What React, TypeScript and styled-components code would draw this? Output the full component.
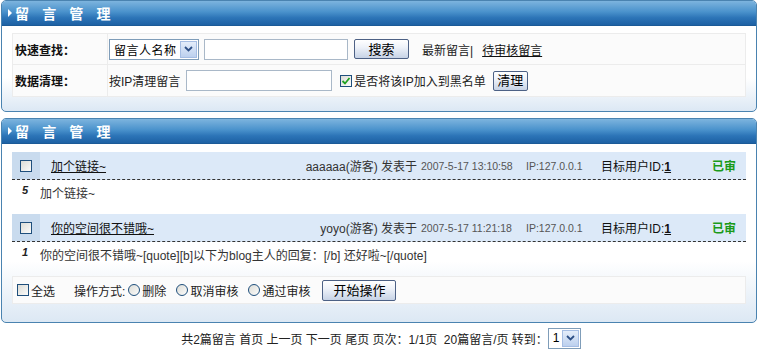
import React from "react";
import styled, { createGlobalStyle } from "styled-components";

const Global = createGlobalStyle`
  html, body { margin: 0; padding: 0; background: #fff; }
  body {
    font-family: "Liberation Sans", "Noto Sans CJK SC", sans-serif;
    font-size: 12px;
    color: #222;
    width: 758px;
  }
  * { box-sizing: border-box; }
`;

const Page = styled.div`
  width: 758px;
  padding: 0 1px 0 1px;
`;

const Panel = styled.section<{ $gap?: number }>`
  border: 1px solid #4a83b0;
  border-radius: 5px;
  overflow: hidden;
  margin-top: ${(p) => p.$gap ?? 0}px;
  background: linear-gradient(to bottom, #ffffff 0%, #ffffff 70%, #dce8f4 100%);
`;

const PanelHead = styled.div`
  height: 25px;
  display: flex;
  align-items: center;
  padding-left: 6px;
  background: linear-gradient(to bottom, #7db4de 0%, #4a92cc 45%, #2c74b7 70%, #1d61a4 100%);
  border-bottom: 1px solid #1b5a97;
  color: #fff;
  font-family: "Noto Sans CJK SC", sans-serif;
  font-weight: 700;
  font-size: 14px;
  letter-spacing: 5px;
  line-height: 1;
`;

const Arrow = styled.span`
  width: 0;
  height: 0;
  border-top: 4px solid transparent;
  border-bottom: 4px solid transparent;
  border-left: 4px solid #fff;
  margin-right: 3px;
`;

const PanelBody = styled.div<{ $pt: number; $pb: number }>`
  padding: ${(p) => p.$pt}px 10px ${(p) => p.$pb}px 10px;
`;

const FormTable = styled.div`
  border: 1px solid #ececec;
  background: #fbfbfb;
`;

const FormRow = styled.div<{ $last?: boolean }>`
  display: grid;
  grid-template-columns: 95px 1fr;
  height: 31px;
  border-bottom: ${(p) => (p.$last ? "none" : "1px solid #ececec")};
`;

const FormLabel = styled.div`
  display: flex;
  align-items: center;
  padding-left: 2px;
  font-weight: 700;
  font-family: "Noto Sans CJK SC", sans-serif;
  border-right: 1px solid #ececec;
  color: #111;
`;

const FormCell = styled.div`
  display: flex;
  align-items: center;
  padding-left: 1px;
`;

const SelectBox = styled.div<{ $w: number }>`
  width: ${(p) => p.$w}px;
  height: 21px;
  border: 1px solid #7f9db9;
  background: #fff;
  display: flex;
  align-items: center;
  justify-content: space-between;
  padding: 1px 1px 1px 4px;
  font-size: 12px;
  letter-spacing: 0.5px;
  color: #000;
  white-space: nowrap;
`;

const SelectArrow = styled.span`
  width: 17px;
  height: 17px;
  background: linear-gradient(to bottom, #e4edfa, #bcd0ee);
  border: 1px solid #a5bde3;
  display: flex;
  align-items: center;
  justify-content: center;
  flex: none;
`;

const TextInput = styled.div<{ $w: number; $ml: number }>`
  width: ${(p) => p.$w}px;
  height: 21px;
  margin-left: ${(p) => p.$ml}px;
  border: 1px solid #a9b8c8;
  background: #fff;
`;

const Btn = styled.button<{ $w: number; $h: number; $ml: number }>`
  width: ${(p) => p.$w}px;
  height: ${(p) => p.$h}px;
  margin-left: ${(p) => p.$ml}px;
  border: 1px solid #4d6185;
  border-radius: 2px;
  background: linear-gradient(to bottom, #ffffff 0%, #eef2f9 40%, #c7d3e6 100%);
  font-family: "Noto Sans CJK SC", sans-serif;
  font-size: 13px;
  line-height: 1;
  color: #000;
  padding: 0 0 2px 0;
  display: flex;
  align-items: center;
  justify-content: center;
`;

const Plain = styled.span<{ $ml?: number }>`
  margin-left: ${(p) => p.$ml ?? 0}px;
  color: #222;
  white-space: nowrap;
`;

const Link = styled.a<{ $ml?: number }>`
  margin-left: ${(p) => p.$ml ?? 0}px;
  color: #111;
  text-decoration: underline;
  white-space: nowrap;
`;

const CheckBox = styled.span<{ $ml?: number }>`
  width: 12px;
  height: 12px;
  margin-left: ${(p) => p.$ml ?? 0}px;
  border: 1px solid #1f4f7c;
  background: linear-gradient(135deg, #dcdcd6, #fcfcfb);
  display: inline-flex;
  align-items: center;
  justify-content: center;
  flex: none;
`;

const Radio = styled.span<{ $ml?: number }>`
  width: 12px;
  height: 12px;
  border-radius: 50%;
  margin-left: ${(p) => p.$ml ?? 0}px;
  border: 1px solid #1f4f7c;
  background: linear-gradient(135deg, #dcdcd6, #fcfcfb);
  flex: none;
`;

const MsgHead = styled.div<{ $mt: number }>`
  margin-top: ${(p) => p.$mt}px;
  display: grid;
  grid-template-columns: 28px 1fr auto 105px 75px 111px 34px;
  height: 28px;
  background: #dce9f8;
  border-bottom: 1px dashed #333;
  align-items: center;
`;

const CheckCell = styled.div`
  height: 100%;
  background: #c9dbee;
  display: flex;
  align-items: center;
  justify-content: center;
`;

const Title = styled.a`
  padding-left: 11px;
  color: #111;
  text-decoration: underline;
  font-size: 12px;
`;

const Author = styled.span`
  color: #333;
  text-align: right;
  padding-right: 4px;
  white-space: nowrap;
`;

const Small = styled.span`
  font-size: 10.5px;
  color: #555;
  white-space: nowrap;
`;

const Target = styled.span`
  font-size: 12px;
  color: #111;
  white-space: nowrap;
  & u { font-weight: 700; }
`;

const Status = styled.span`
  color: #1a9a1a;
  font-weight: 700;
  font-family: "Noto Sans CJK SC", sans-serif;
`;

const MsgBody = styled.div<{ $h: number }>`
  display: grid;
  grid-template-columns: 28px 1fr;
  height: ${(p) => p.$h}px;
  align-items: start;
  padding-top: 4px;
  color: #333;
`;

const Num = styled.span`
  text-align: center;
  font-weight: 700;
  font-style: italic;
  font-size: 11px;
  color: #222;
  padding-right: 2px;
`;

const Ops = styled.div`
  height: 28px;
  border: 1px solid #ececec;
  background: #fbfbfb;
  display: flex;
  align-items: center;
  padding-left: 4px;
`;

const Pager = styled.div`
  height: 30px;
  display: flex;
  align-items: center;
  justify-content: center;
  padding-left: 4px;
  color: #222;
  white-space: pre;
`;

const Chevron = () => (
  <svg width="9" height="6" viewBox="0 0 9 6">
    <path d="M1 1 L4.5 4.5 L8 1" fill="none" stroke="#2d4f86" strokeWidth="1.8" />
  </svg>
);

const Tick = () => (
  <svg width="10" height="10" viewBox="0 0 10 10">
    <path d="M1.5 5 L4 7.5 L8.5 2" fill="none" stroke="#21a121" strokeWidth="1.8" />
  </svg>
);

const messages = [
  {
    title: "加个链接~",
    author: "aaaaaa(游客) 发表于",
    date: "2007-5-17 13:10:58",
    num: "5",
    body: "加个链接~",
    mt: 8,
    h: 34,
  },
  {
    title: "你的空间很不错哦~",
    author: "yoyo(游客) 发表于",
    date: "2007-5-17 11:21:18",
    num: "1",
    body: "你的空间很不错哦~[quote][b]以下为blog主人的回复：[/b] 还好啦~[/quote]",
    mt: 0,
    h: 34,
  },
];

export default function App() {
  return (
    <Page>
      <Global />
      <Panel>
        <PanelHead>
          <Arrow />
          留 言 管 理
        </PanelHead>
        <PanelBody $pt={7} $pb={14}>
          <FormTable>
            <FormRow>
              <FormLabel>快速查找：</FormLabel>
              <FormCell>
                <SelectBox $w={90}>
                  留言人名称
                  <SelectArrow>
                    <Chevron />
                  </SelectArrow>
                </SelectBox>
                <TextInput $w={144} $ml={5} />
                <Btn $w={55} $h={20} $ml={6}>搜索</Btn>
                <Plain $ml={13}>最新留言|</Plain>
                <Link $ml={9}>待审核留言</Link>
              </FormCell>
            </FormRow>
            <FormRow $last>
              <FormLabel>数据清理：</FormLabel>
              <FormCell>
                <Plain>按IP清理留言</Plain>
                <TextInput $w={146} $ml={6} />
                <CheckBox $ml={8}>
                  <Tick />
                </CheckBox>
                <Plain $ml={2}>是否将该IP加入到黑名单</Plain>
                <Btn $w={35} $h={20} $ml={7}>清理</Btn>
              </FormCell>
            </FormRow>
          </FormTable>
        </PanelBody>
      </Panel>

      <Panel $gap={6}>
        <PanelHead>
          <Arrow />
          留 言 管 理
        </PanelHead>
        <PanelBody $pt={0} $pb={18}>
          {messages.map((m) => (
            <React.Fragment key={m.num}>
              <MsgHead $mt={m.mt}>
                <CheckCell>
                  <CheckBox />
                </CheckCell>
                <Title>{m.title}</Title>
                <Author>{m.author}</Author>
                <Small>{m.date}</Small>
                <Small>IP:127.0.0.1</Small>
                <Target>
                  目标用户ID:<u>1</u>
                </Target>
                <Status>已审</Status>
              </MsgHead>
              <MsgBody $h={m.h}>
                <Num>{m.num}</Num>
                <span>{m.body}</span>
              </MsgBody>
            </React.Fragment>
          ))}
          <Ops>
            <CheckBox />
            <Plain $ml={2}>全选</Plain>
            <Plain $ml={19}>操作方式:</Plain>
            <Radio $ml={3} />
            <Plain $ml={2}>删除</Plain>
            <Radio $ml={10} />
            <Plain $ml={2}>取消审核</Plain>
            <Radio $ml={10} />
            <Plain $ml={2}>通过审核</Plain>
            <Btn $w={74} $h={21} $ml={12}>开始操作</Btn>
          </Ops>
        </PanelBody>
      </Panel>

      <Pager>
        共2篇留言 首页 上一页 下一页 尾页 页次：1/1页  20篇留言/页 转到：
        <SelectBox $w={33}>
          1
          <SelectArrow>
            <Chevron />
          </SelectArrow>
        </SelectBox>
      </Pager>
    </Page>
  );
}
